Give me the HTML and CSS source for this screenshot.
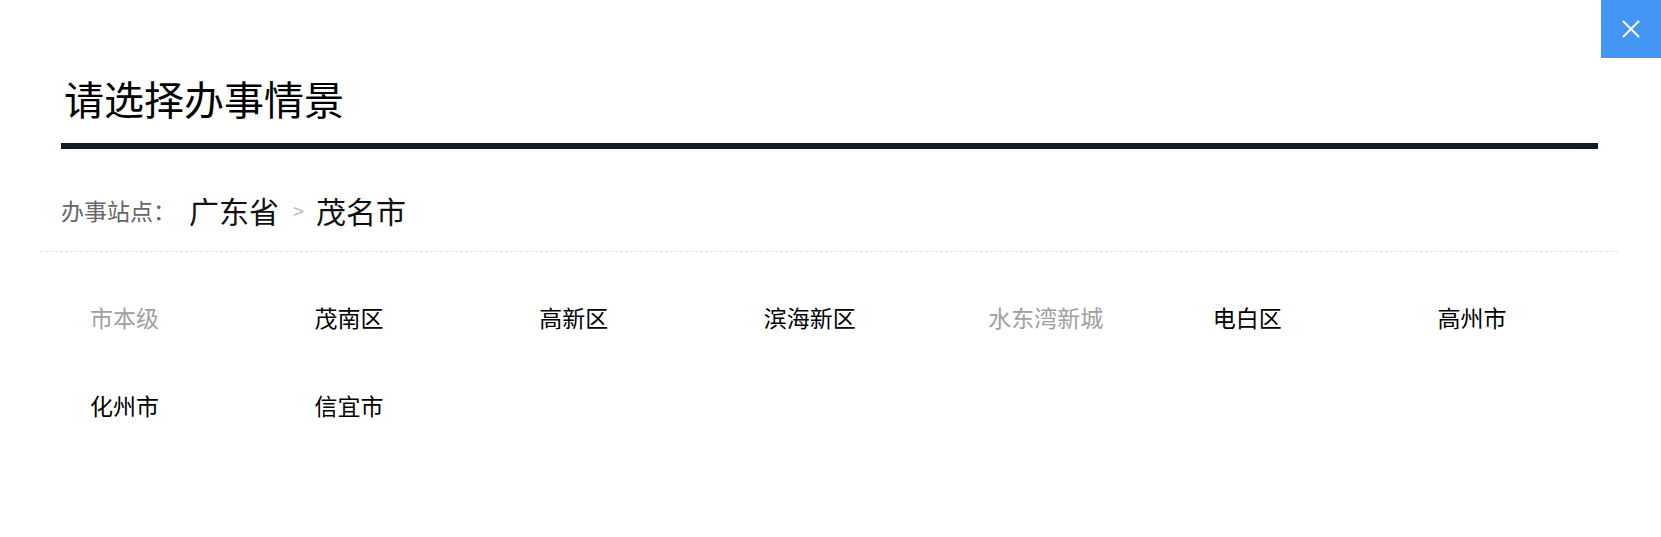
FILE: index.html
```html
<!DOCTYPE html>
<html lang="zh-CN">
<head>
  <meta charset="UTF-8">
  <title>请选择办事情景</title>
  <link rel="stylesheet" href="styles.css">
</head>
<body>
  <div class="dialog">
    <button type="button" class="close-btn" title="关闭">
      <svg width="18" height="18" viewBox="0 0 18 18">
        <path d="M1 1 L17 17 M17 1 L1 17" stroke="#fff" stroke-width="2" fill="none"/>
      </svg>
    </button>

    <div class="dialog-header">
      <h2>请选择办事情景</h2>
    </div>

    <div class="site-bar">
      <span class="site-label">办事站点：</span>
      <span class="site-path">广东省</span>
      <span class="site-sep">&gt;</span>
      <span class="site-path">茂名市</span>
    </div>

    <ul class="area-list">
      <li class="disabled">市本级</li>
      <li>茂南区</li>
      <li>高新区</li>
      <li>滨海新区</li>
      <li class="disabled">水东湾新城</li>
      <li>电白区</li>
      <li>高州市</li>
      <li>化州市</li>
      <li>信宜市</li>
    </ul>
  </div>
</body>
</html>
```

FILE: styles.css
```css
body {
  margin: 0;
  padding: 0;
  background: #fff;
  color: #111;
  font-family: "Noto Sans CJK SC", "Noto Sans", sans-serif;
}

.dialog {
  position: relative;
  padding: 0 43px 0 40px;
}

.close-btn {
  position: absolute;
  top: 0;
  right: 0;
  width: 60px;
  height: 58px;
  border: none;
  padding: 0;
  background: #4496f5;
  display: flex;
  align-items: center;
  justify-content: center;
  cursor: pointer;
}

.dialog-header {
  margin: 0 20px 0 21px;
  padding: 70px 0 17px 3px;
  border-bottom: 6px solid #121c29;
}

.dialog-header h2 {
  margin: 0;
  font-size: 40px;
  line-height: 56px;
  font-weight: normal;
  color: #000;
}

.site-bar {
  display: flex;
  align-items: center;
  height: 40px;
  padding: 41px 0 21px 21px;
  border-bottom: 1px dashed #e2e2e2;
}

.site-label {
  font-size: 23px;
  color: #666;
}

.site-path {
  font-size: 30px;
  color: #111;
}

.site-label + .site-path {
  margin-left: 13px;
}

.site-sep {
  font-size: 20px;
  color: #bbb;
  margin: 0 12px 0 14px;
}

.area-list {
  list-style: none;
  margin: 0;
  padding: 45px 6px 0 0;
  display: grid;
  grid-template-columns: repeat(7, 1fr);
  row-gap: 48px;
}

.area-list li {
  padding-left: 50px;
  font-size: 23px;
  line-height: 40px;
  color: #000;
  cursor: pointer;
}

.area-list li.disabled {
  color: #a0a0a0;
  cursor: default;
}
```
